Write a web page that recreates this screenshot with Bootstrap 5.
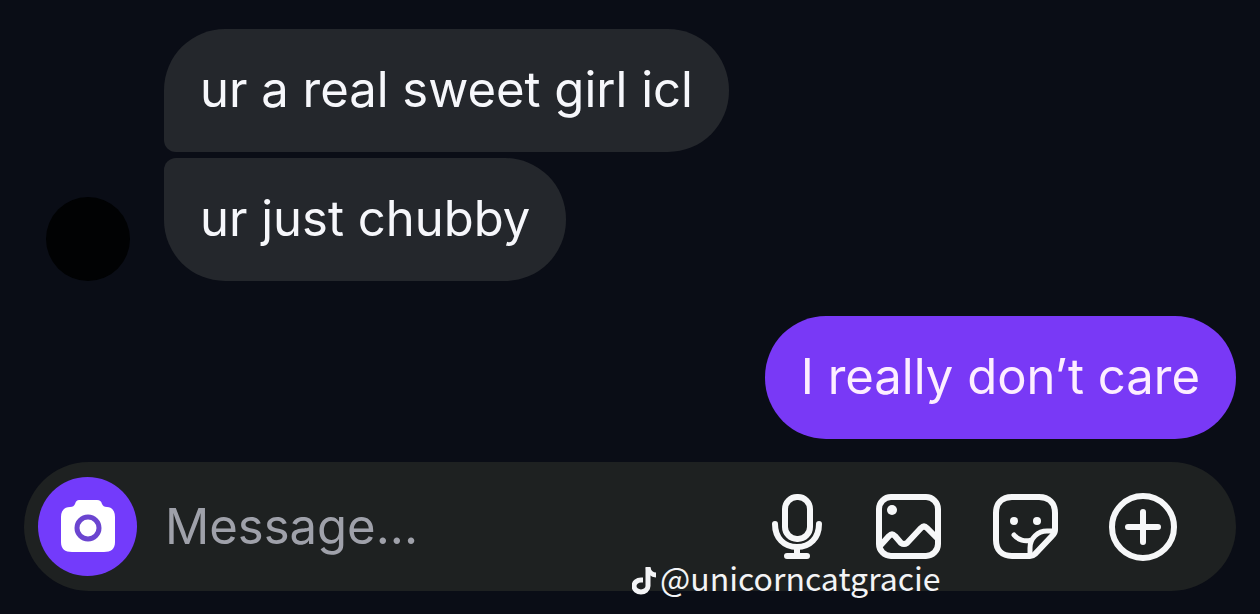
<!DOCTYPE html>
<html lang="en">
<head>
<meta charset="utf-8">
<meta name="viewport" content="width=device-width, initial-scale=1">
<title>Chat</title>
<link href="https://cdn.jsdelivr.net/npm/bootstrap@5.3.0/dist/css/bootstrap.min.css" rel="stylesheet">
<style>
body { background: #0a0d16; color: #f6f7fb; font-family: Inter, "Liberation Sans", sans-serif; }
.chat { padding: 29px 24px 23px; }
.thread { gap: 35px; margin-bottom: 23px; }
.incoming { gap: 34px; padding-left: 22px; }
.avatar { width: 84px; height: 84px; background: #010203; }
.bubbles { gap: 6px; }
.bubble { padding: 30px 36px 31px; border-radius: 61px; font-size: 49px; line-height: 62px; background: #24272c; }
.bubble-first { border-bottom-left-radius: 12px; }
.bubble-last { border-top-left-radius: 12px; }
.bubble-own { background: #7939f6; color: #fdeeff; }
.composer { padding: 15px 59px 15px 14px; border-radius: 65px; background: #1e2121; }
.camera { width: 99px; height: 99px; background: #733bfb; }
.message-input { font-size: 49px; line-height: 62px; margin-left: 28px; padding: 0; min-width: 0; }
.message-input, .message-input:focus { background: transparent; color: #f6f7fb; border: 0; box-shadow: none; }
.message-input::placeholder { color: #9fa1aa; opacity: 1; }
.tools { gap: 49px; }
.tools .btn, .camera { line-height: 0; border: 0; color: #f6f7f8; }
.handle { left: 50%; top: 100%; margin: -32px 0 0 2px; font-family: "Noto Sans CJK SC", sans-serif; font-size: 32px; line-height: 36px; color: #f3f4f6; white-space: nowrap; gap: 3px; }
</style>
</head>
<body>
<main class="chat d-flex flex-column justify-content-start min-vh-100">
  <section class="thread d-flex flex-column" aria-label="Conversation">
    <div class="incoming d-flex align-items-end">
      <div class="avatar rounded-circle flex-shrink-0"></div>
      <div class="bubbles d-flex flex-column align-items-start">
        <div class="bubble bubble-first">ur a real sweet girl icl</div>
        <div class="bubble bubble-last">ur just chubby</div>
      </div>
    </div>
    <div class="bubble bubble-own align-self-end">I really don’t care</div>
  </section>

  <form class="composer position-relative d-flex align-items-center">
    <button type="button" class="camera btn rounded-circle p-0 flex-shrink-0" aria-label="Camera">
      <svg width="56" height="54" viewBox="0 0 56 54" aria-hidden="true">
        <path fill="#fff" d="M19 0h18c3 0 4 1 5 4 1 2 2 3 5 3 5 0 8 4 8 10v25c0 7-4 10-11 10H12C5 52 1 49 1 42V17C1 11 4 7 10 7c3 0 4-1 5-3 1-3 2-4 4-4z"/>
        <circle cx="28" cy="28" r="11" fill="none" stroke="#6b45d0" stroke-width="5"/>
      </svg>
    </button>
    <input type="text" class="message-input form-control flex-grow-1" placeholder="Message..." aria-label="Message">
    <div class="tools d-flex align-items-center flex-shrink-0">
      <button type="button" class="btn p-0" aria-label="Voice message">
        <svg width="58" height="68" viewBox="0 0 58 68" fill="none" stroke="currentColor" stroke-width="6" stroke-linecap="round" aria-hidden="true">
          <rect x="17" y="4" width="25" height="42" rx="12"/>
          <path d="M7 31c0 14 9 23 22 23s22-9 22-23M29 55v8M19 63h20"/>
        </svg>
      </button>
      <button type="button" class="btn p-0" aria-label="Photo">
        <svg width="68" height="68" viewBox="0 0 68 68" fill="none" stroke="currentColor" stroke-width="6" stroke-linejoin="round" aria-hidden="true">
          <rect x="4" y="4" width="59" height="59" rx="12"/>
          <circle cx="17" cy="17" r="5" fill="currentColor" stroke="none"/>
          <path d="M4 54l10-11q3-3 6 0l6 7q3 2 6 0l14-15q3-3 6 0l11 11"/>
        </svg>
      </button>
      <button type="button" class="btn p-0" aria-label="Sticker">
        <svg width="68" height="68" viewBox="0 0 68 68" fill="none" stroke="currentColor" stroke-width="6" stroke-linejoin="round" stroke-linecap="round" aria-hidden="true">
          <path d="M38 63H20C10 63 4 57 4 47V20C4 10 10 4 20 4h27c10 0 16 6 16 16v17c0 3-1 4-3 6L43 61c-2 2-3 2-5 2z"/>
          <path stroke-width="5" d="M38 61V55c0-10 8-17 17-17h6M22 42c4 5 11 7 17 5"/>
          <circle cx="22" cy="28" r="4" fill="currentColor" stroke="none"/>
          <circle cx="45" cy="28" r="4" fill="currentColor" stroke="none"/>
        </svg>
      </button>
      <button type="button" class="btn p-0" aria-label="More">
        <svg width="68" height="68" viewBox="0 0 68 68" fill="none" stroke="currentColor" stroke-width="6" stroke-linecap="round" aria-hidden="true">
          <circle cx="34" cy="34" r="31"/>
          <path d="M34 19v30M19 34h30"/>
        </svg>
      </button>
    </div>
    <div class="handle position-absolute d-flex align-items-end">
      <svg width="25" height="28" viewBox="0 0 25 28" fill="none" stroke="currentColor" aria-hidden="true">
        <path stroke-width="5" d="M16 0v19a7 6 0 1 1-7-6h2"/>
        <path stroke-width="5" d="M16 1c1 4 4 7 8 7"/>
      </svg>
      <span>@unicorncatgracie</span>
    </div>
  </form>
</main>
<script src="https://cdn.jsdelivr.net/npm/bootstrap@5.3.0/dist/js/bootstrap.bundle.min.js"></script>
</body>
</html>
